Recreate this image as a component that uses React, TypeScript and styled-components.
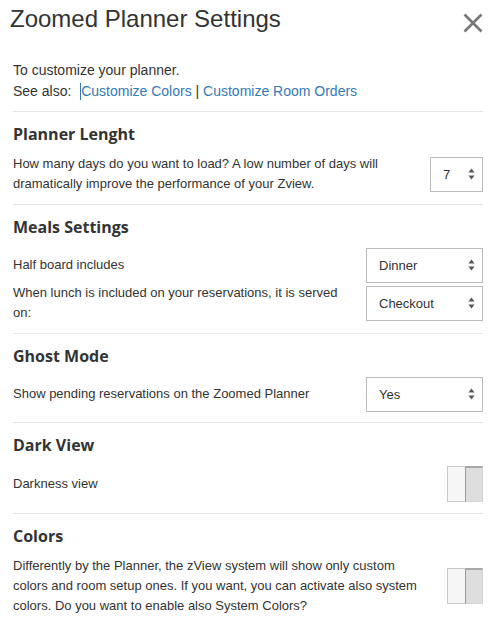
import styled, { createGlobalStyle } from 'styled-components'

const GlobalStyle = createGlobalStyle`
  html, body {
    margin: 0;
    padding: 0;
    background: #fff;
  }
  body {
    font-family: 'Liberation Sans', Arial, sans-serif;
    color: #333;
  }
`

type SelectProps = { value: string; options: string[]; width: number }

const Select = ({ value, options, width }: SelectProps) => (
  <SelectWrap $width={width}>
    <SelectBox defaultValue={value}>
      {options.map((o) => (
        <option key={o}>{o}</option>
      ))}
    </SelectBox>
    <Arrows width="7" height="12" viewBox="0 0 7 12">
      <path d="M3.5 0.5 L6.5 4.5 L0.5 4.5 Z" fill="#555" />
      <path d="M3.5 11.5 L6.5 7.5 L0.5 7.5 Z" fill="#555" />
    </Arrows>
  </SelectWrap>
)

const Toggle = () => (
  <Switch>
    <Knob />
  </Switch>
)

export default function App() {
  return (
    <Modal>
      <GlobalStyle />
      <Header>
        <Title>Zoomed Planner Settings</Title>
        <Close aria-label="close">
          <svg width="20" height="20" viewBox="0 0 20 20">
            <path d="M1.5 1.5 L18.5 18.5 M18.5 1.5 L1.5 18.5" stroke="#777" strokeWidth="2.6" />
          </svg>
        </Close>
      </Header>
      <Intro>
        <div>To customize your planner.</div>
        <div>
          See also:&nbsp; <Caret />
          <Link href="#">Customize Colors</Link> | <Link href="#">Customize Room Orders</Link>
        </div>
      </Intro>

      <Section>
        <Heading>Planner Lenght</Heading>
        <Row>
          <Label>How many days do you want to load? A low number of days will dramatically improve the performance of your Zview.</Label>
          <Select value="7" options={['7', '14', '21', '30']} width={53} />
        </Row>
      </Section>

      <Section>
        <Heading>Meals Settings</Heading>
        <Row>
          <Label>Half board includes</Label>
          <Select value="Dinner" options={['Dinner', 'Lunch']} width={117} />
        </Row>
        <Row>
          <Label>When lunch is included on your reservations, it is served on:</Label>
          <Select value="Checkout" options={['Checkout', 'Checkin']} width={117} />
        </Row>
      </Section>

      <Section>
        <Heading>Ghost Mode</Heading>
        <Row>
          <Label>Show pending reservations on the Zoomed Planner</Label>
          <Select value="Yes" options={['Yes', 'No']} width={117} />
        </Row>
      </Section>

      <Section>
        <Heading>Dark View</Heading>
        <Row>
          <Label>Darkness view</Label>
          <Toggle />
        </Row>
      </Section>

      <Section $last>
        <Heading>Colors</Heading>
        <Row>
          <Label>
            Differently by the Planner, the zView system will show only custom colors and room setup ones. If you want, you can activate also system colors. Do you want to enable also System Colors?
          </Label>
          <Toggle />
        </Row>
      </Section>
    </Modal>
  )
}

const Modal = styled.div`
  width: 498px;
  box-sizing: border-box;
  padding: 0 15px 0 13px;
  background: #fff;
`
const Header = styled.div`
  display: flex;
  justify-content: space-between;
  align-items: flex-start;
  padding-top: 6px;
  height: 54px;
  margin-left: -3px;
`
const Title = styled.h4`
  margin: 0;
  font-size: 24px;
  line-height: 26px;
  font-weight: 400;
  color: #333;
`
const Close = styled.button`
  border: 0;
  background: none;
  padding: 0;
  margin-top: 7px;
  width: 20px;
  height: 20px;
  cursor: pointer;
  svg {
    display: block;
  }
`
const Intro = styled.div`
  font-size: 14px;
  line-height: 21px;
  padding-bottom: 9px;
  border-bottom: 1px solid #e5e5e5;
`
const Caret = styled.span`
  display: inline-block;
  width: 1px;
  height: 17px;
  background: #337ab7;
  vertical-align: -4px;
  margin-left: 1px;
`
const Link = styled.a`
  color: #337ab7;
  text-decoration: none;
`
const Section = styled.section<{ $last?: boolean }>`
  padding: 10px 0;
  border-bottom: ${(p) => (p.$last ? 'none' : '1px solid #e5e5e5')};
`
const Heading = styled.h3`
  margin: 0 0 8px;
  font-family: 'Open Sans', sans-serif;
  font-size: 16px;
  line-height: 24px;
  font-weight: 700;
  color: #333;
`
const Row = styled.div`
  display: flex;
  align-items: center;
  justify-content: space-between;
  gap: 20px;
  min-height: 36px;
`
const Label = styled.div`
  flex: 1;
  font-size: 13px;
  line-height: 20px;
  color: #333;
`
const SelectWrap = styled.div<{ $width: number }>`
  position: relative;
  flex: none;
  width: ${(p) => p.$width}px;
  height: 35px;
`
const SelectBox = styled.select`
  appearance: none;
  -webkit-appearance: none;
  width: 100%;
  height: 100%;
  box-sizing: border-box;
  border: 1px solid #bbb;
  border-radius: 0;
  background: #fff;
  padding: 0 0 0 12px;
  font-family: 'Liberation Sans', Arial, sans-serif;
  font-size: 13px;
  color: #333;
  outline: none;
`
const Arrows = styled.svg`
  position: absolute;
  right: 8px;
  top: 11px;
  pointer-events: none;
`
const Switch = styled.div`
  flex: none;
  position: relative;
  width: 36px;
  height: 36px;
  margin: 1px 0;
  box-sizing: border-box;
  border: 1px solid #d4d4d4;
  border-top: 2px solid #a9a9a9;
  background: #dedede;
`
const Knob = styled.div`
  position: absolute;
  left: -1px;
  top: -2px;
  bottom: -1px;
  width: 19px;
  box-sizing: border-box;
  background: #f6f6f6;
  border: 1px solid #c8c8c8;
  border-right: 1px solid #999;
`
